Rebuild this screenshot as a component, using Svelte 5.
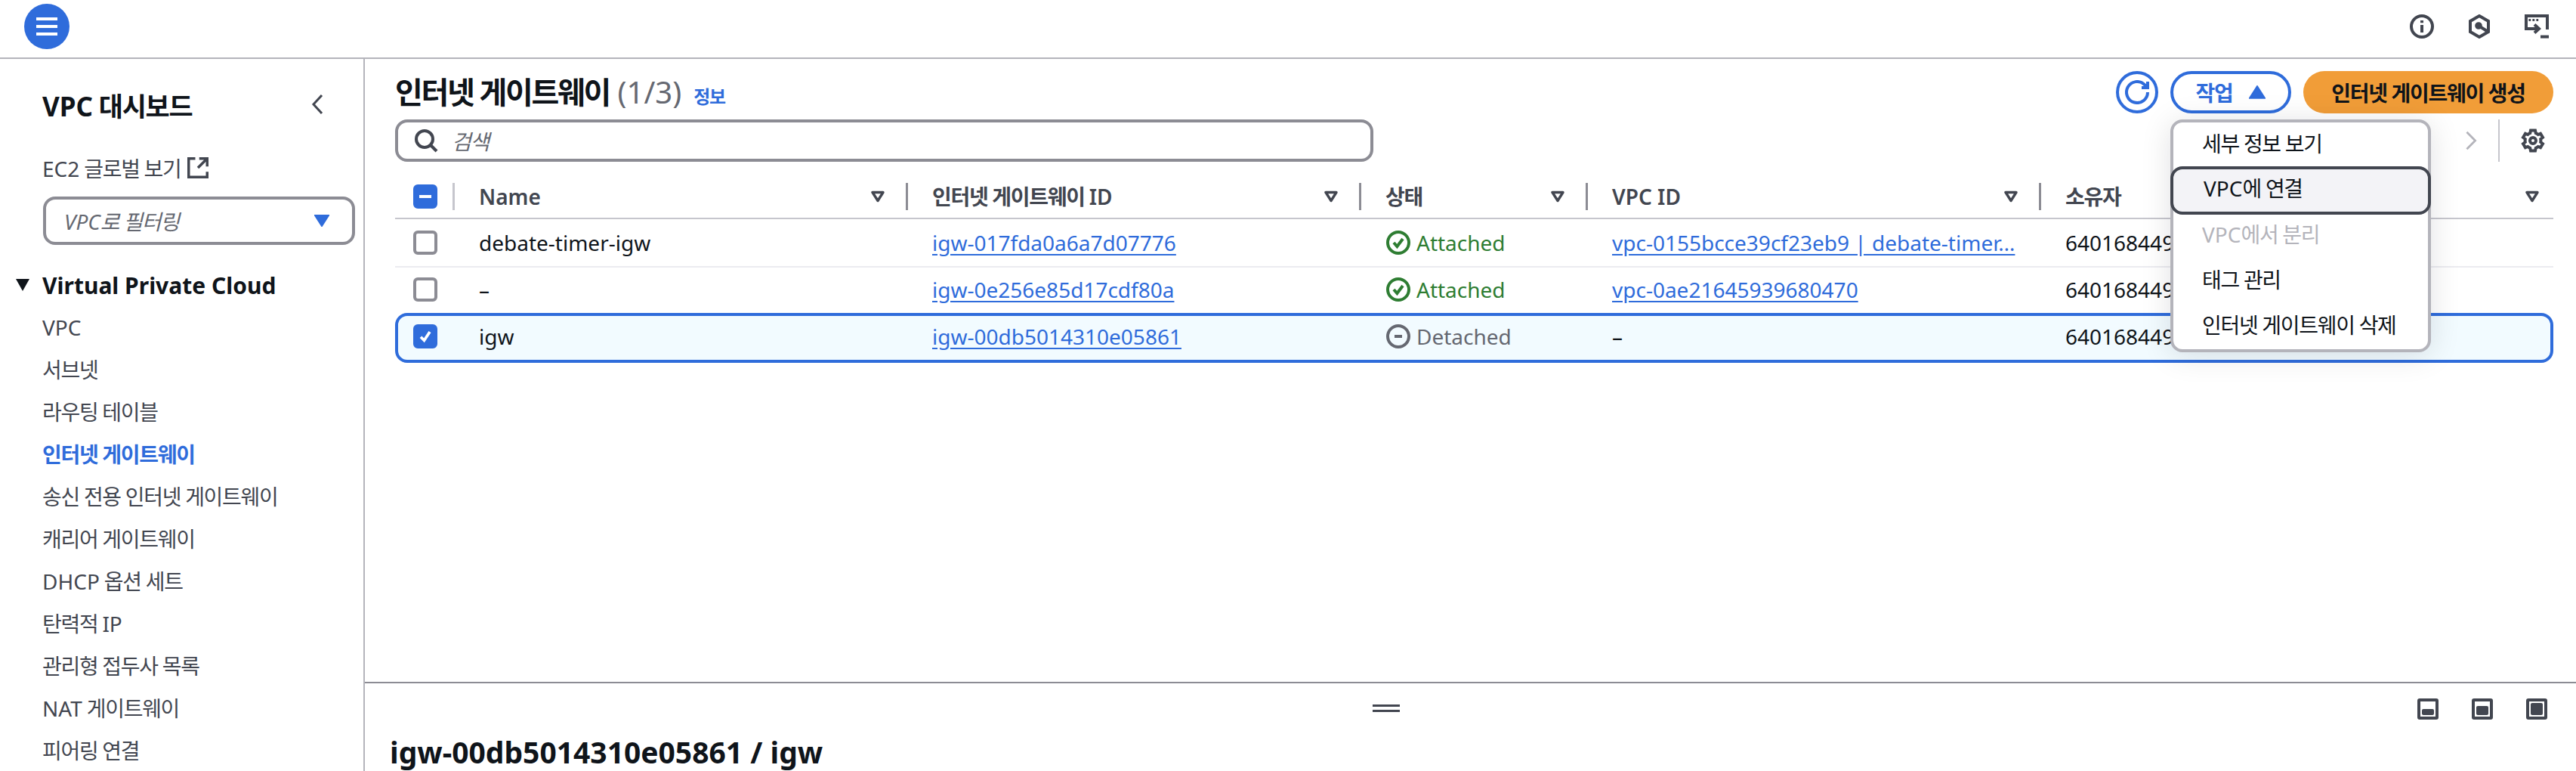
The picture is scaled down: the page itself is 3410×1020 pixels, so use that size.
<script>
  const navItems = [
    { label: 'VPC' }, { label: '서브넷' }, { label: '라우팅 테이블' },
    { label: '인터넷 게이트웨이', active: true }, { label: '송신 전용 인터넷 게이트웨이' },
    { label: '캐리어 게이트웨이' }, { label: 'DHCP 옵션 세트' }, { label: '탄력적 IP' },
    { label: '관리형 접두사 목록' }, { label: 'NAT 게이트웨이' }, { label: '피어링 연결' }
  ];
  const columns = [
    { label: 'Name', cls: 'name' }, { label: '인터넷 게이트웨이 ID' }, { label: '상태' },
    { label: 'VPC ID' }, { label: '소유자' }
  ];
  const rows = [
    { name: 'debate-timer-igw', id: 'igw-017fda0a6a7d07776', state: 'Attached', vpc: 'vpc-0155bcce39cf23eb9 | debate-timer…' },
    { name: '–', id: 'igw-0e256e85d17cdf80a', state: 'Attached', vpc: 'vpc-0ae21645939680470' },
    { name: 'igw', id: 'igw-00db5014310e05861', state: 'Detached', vpc: '', selected: true }
  ];
  const menu = [
    { label: '세부 정보 보기' }, { label: 'VPC에 연결', focus: true }, { label: 'VPC에서 분리', disabled: true },
    { label: '태그 관리' }, { label: '인터넷 게이트웨이 삭제' }
  ];
  // Hangul runs are set tighter than Latin runs, as in the reference's font.
  function runs(s) {
    return (s.match(/[\uAC00-\uD7A3 ]+|[^\uAC00-\uD7A3 ]+/g) || []).map((t) => ({ t, ko: /[\uAC00-\uD7A3]/.test(t) }));
  }
</script>

{#snippet tx(s)}<span class="tx">{#each runs(s) as r}<span class:ko={r.ko}>{r.t}</span>{/each}</span>{/snippet}

<div class="page">
  <header class="topbar">
    <button class="burger" aria-label="메뉴"><span></span><span></span><span></span></button>
    <div class="top-icons">
      <svg class="i32" viewBox="0 0 16 16"><circle cx="8" cy="8" r="7"/><path d="M8 7v5M8 4v1.6"/></svg>
      <svg class="i32" viewBox="0 0 16 16"><path d="M8 1l6 3.500v7L8 15l-6-3.500v-7z"/><path d="M7.500 7.500l5.500 3.500"/><circle class="solid" cx="7.500" cy="7.500" r="1.400"/></svg>
      <svg class="i32" viewBox="0 0 16 16"><path d="M15 10V1H1v8.500h8.500"/><path d="M6.500 6.800l3 2.700-3 2.700"/><path d="M10.500 14.800H16"/><path class="thin" d="M2.700 3.700h1.400M5.200 3.700h1.400M7.700 3.700h1.400"/></svg>
    </div>
  </header>

  <div class="body">
    <nav class="sidebar">
      <div class="side-head">
        {@render tx('VPC 대시보드')}
        <svg class="chev" viewBox="0 0 16 28"><path d="M14 2L3 14l11 12"/></svg>
      </div>
      <div class="global">
        {@render tx('EC2 글로벌 보기')}
        <svg class="ext" viewBox="0 0 16 16"><path d="M15 7V1H9M15 1L8 8M6 1H1v14h14v-4"/></svg>
      </div>
      <div class="vpc-filter">
        {@render tx('VPC로 필터링')}
        <svg class="caret" viewBox="0 0 20 16"><path d="M1 1h18L10 15z"/></svg>
      </div>
      <div class="section">
        <svg class="sec-caret" viewBox="0 0 20 16"><path d="M1 0h18L10 16z"/></svg>
        <span>Virtual Private Cloud</span>
      </div>
      <ul>
        {#each navItems as item}
          <li class:active={item.active}>{@render tx(item.label)}</li>
        {/each}
      </ul>
    </nav>

    <main class="content">
      <section class="upper">
        <div class="title-row">
          <h1>{@render tx('인터넷 게이트웨이')} <span class="count">(1/3)</span></h1>
          <a class="info" href="#info">{@render tx('정보')}</a>
          <div class="actions">
            <button class="refresh" aria-label="새로 고침">
              <svg viewBox="0 0 16 16"><path d="M15 8a7 7 0 1 1-2.100-5L15 5"/><path d="M15 1v4h-4"/></svg>
            </button>
            <div class="action-wrap">
              <button class="act">{@render tx('작업')}
                <svg viewBox="0 0 20 16"><path d="M10 1l9 14H1z"/></svg>
              </button>
              <div class="menu">
                {#each menu as m}
                  <div class="menu-item" class:focus={m.focus} class:disabled={m.disabled}>{@render tx(m.label)}</div>
                {/each}
              </div>
            </div>
            <button class="primary">{@render tx('인터넷 게이트웨이 생성')}</button>
          </div>
        </div>

        <div class="search-row">
          <div class="search">
            <svg viewBox="0 0 16 16"><circle cx="7" cy="7" r="5.500"/><path d="M11 11l4 4"/></svg>
            {@render tx('검색')}
          </div>
          <div class="pager">
            <svg class="next" viewBox="0 0 16 28"><path d="M2 2l12 12L2 26"/></svg>
            <div class="pager-sep"></div>
            <svg class="gear" viewBox="0 0 16 16"><path d="M13.100 7l1.400-1.100L13 3.400l-1.600.6a5.500 5.500 0 0 0-1.500-.9L9.500 1.300h-3l-.4 1.800c-.55.2-1.050.5-1.500.9L3 3.400 1.500 5.900 2.900 7a5.500 5.500 0 0 0 0 2L1.500 10.100 3 12.600l1.600-.6c.45.4.95.7 1.500.9l.4 1.800h3l.4-1.800c.55-.2 1.050-.5 1.500-.9l1.600.6 1.500-2.500L13.100 9a5.500 5.500 0 0 0 0-2z"/><circle cx="8" cy="8" r="2"/></svg>
          </div>
        </div>

        <div class="table">
          <div class="thead grid">
            <div class="th check-col">
              <span class="cb on"><i class="dash"></i></span>
            </div>
            {#each columns as c}
              <div class="th">
                {@render tx(c.label)}
                <svg class="sort" viewBox="0 0 20 16"><path d="M3 2.500h14L10 13.500z"/></svg>
              </div>
            {/each}
          </div>
          {#each rows as r}
            <div class="tr grid" class:selected={r.selected}>
              <div class="td check-col">
                {#if r.selected}
                  <span class="cb on"><svg viewBox="0 0 16 16"><path d="M4 8.500l3 3 5-7.500"/></svg></span>
                {:else}
                  <span class="cb"></span>
                {/if}
              </div>
              <div class="td">{r.name}</div>
              <div class="td"><a href="#igw">{r.id}</a></div>
              <div class="td">
                {#if r.state === 'Attached'}
                  <span class="status ok">
                    <svg viewBox="0 0 16 16"><circle cx="8" cy="8" r="7"/><path d="M5 8l2.200 2.500L11 5.500"/></svg>
                    {r.state}
                  </span>
                {:else}
                  <span class="status off">
                    <svg viewBox="0 0 16 16"><circle cx="8" cy="8" r="7"/><path d="M5.500 8h5"/></svg>
                    {r.state}
                  </span>
                {/if}
              </div>
              <div class="td">
                {#if r.vpc}<a href="#vpc">{r.vpc}</a>{:else}–{/if}
              </div>
              <div class="td">640168449512</div>
            </div>
          {/each}
        </div>
      </section>

      <section class="lower">
        <div class="handle-row">
          <div class="handle"><i></i><i></i></div>
          <div class="split">
            <span class="sp"><i class="s1"></i></span>
            <span class="sp"><i class="s2"></i></span>
            <span class="sp"><i class="s3"></i></span>
          </div>
        </div>
        <h2>igw-00db5014310e05861 / igw</h2>
      </section>
    </main>
  </div>
</div>

<style>
  :global(body) { margin: 0; background: #fff; overflow: hidden; }
  .page {
    width: 3410px; height: 1020px; display: flex; flex-direction: column; overflow: hidden;
    font-family: "Noto Sans", "Noto Sans CJK KR", sans-serif; font-size: 28px; color: #0f141a; background: #fff;
  }
  button { font-family: inherit; cursor: pointer; }
  svg { display: block; fill: none; stroke: currentColor; stroke-width: 2; }
  .tx { white-space: pre; }
  .ko { letter-spacing: -1.3px; }

  .topbar {
    height: 76px; flex: none; border-bottom: 2px solid #b4b4bb; display: flex; align-items: center;
    justify-content: space-between; padding: 0 36px 0 32px; box-sizing: content-box;
  }
  .burger {
    width: 60px; height: 60px; border-radius: 50%; border: 0; background: #2f6cdb; padding: 0; margin-top: -6px;
    display: flex; flex-direction: column; gap: 6px; align-items: center; justify-content: center;
  }
  .burger span { width: 28px; height: 4px; background: #fff; }
  .top-icons { display: flex; gap: 44px; color: #424650; margin-top: -6px; }
  .i32 { width: 32px; height: 32px; }
  .solid { fill: currentColor; }
  .thin { stroke-width: 1.500; }

  .body { flex: 1; display: flex; min-height: 0; }

  .sidebar { width: 483px; flex: none; border-right: 2px solid #b4b4bb; padding-left: 56px; box-sizing: border-box; overflow: hidden; color: #424650; }
  .side-head {
    display: flex; justify-content: space-between; align-items: center; width: 372px; height: 44px; margin-top: 38px;
    font-size: 35px; font-weight: 700; color: #0f141a;
  }
  .chev { width: 16px; height: 28px; stroke: #424650; stroke-width: 3; }
  .global { display: flex; align-items: center; gap: 8px; margin-top: 42px; height: 40px; }
  .ext { width: 28px; height: 28px; stroke: #424650; }
  .vpc-filter {
    margin: 18px 0 0 1px; width: 413px; height: 64px; box-sizing: border-box; border: 4px solid #8c8c94; border-radius: 16px;
    display: flex; align-items: center; justify-content: space-between; padding: 0 30px 0 24px;
    font-style: italic; color: #656871;
  }
  .caret { width: 20px; height: 16px; fill: #2f6cdb; stroke: #2f6cdb; }
  .section { position: relative; margin-top: 32px; height: 42px; display: flex; align-items: center; font-weight: 700; font-size: 30px; color: #0f141a; }
  .sec-caret { position: absolute; left: -36px; top: 13px; width: 20px; height: 16px; fill: #0f141a; stroke: none; }
  ul { list-style: none; margin: 7px 0 0; padding: 0; }
  li { height: 56px; line-height: 56px; white-space: nowrap; }
  li.active { color: #2f6cdb; font-weight: 600; }

  .content { flex: 1; min-width: 0; display: flex; flex-direction: column; }
  .upper { flex: 1; min-height: 0; padding: 16px 30px 0 40px; position: relative; }

  .title-row { display: flex; align-items: center; height: 56px; }
  h1 { margin: 0; font-size: 40px; font-weight: 700; line-height: 56px; white-space: nowrap; }
  h1 .ko { letter-spacing: -2.300px; }
  .count { font-weight: 400; color: #656871; }
  .info { margin-left: 16px; margin-top: 8px; font-size: 24px; color: #2f6cdb; text-decoration: none; font-weight: 700; }
  .actions { margin-left: auto; display: flex; gap: 16px; align-items: center; }
  .refresh {
    width: 56px; height: 56px; border-radius: 50%; border: 4px solid #2f6cdb; background: #fff; color: #2f6cdb;
    padding: 0; display: flex; align-items: center; justify-content: center;
  }
  .refresh svg { width: 32px; height: 32px; }
  .action-wrap { position: relative; }
  .act {
    width: 160px; height: 56px; border-radius: 28px; border: 4px solid #2f6cdb; background: #fff; color: #2f6cdb;
    font-size: 28px; font-weight: 700; display: flex; align-items: center; justify-content: center; gap: 22px; padding: 0;
  }
  .act svg { width: 22px; height: 18px; fill: #2f6cdb; stroke: #2f6cdb; }
  .primary {
    width: 331px; height: 56px; border-radius: 28px; border: 0; background: #f19d38; color: #0f141a;
    font-size: 28px; font-weight: 700; padding: 0;
  }
  .menu {
    position: absolute; z-index: 5; left: 0; top: 64px; width: 345px; box-sizing: border-box; background: #fff;
    border: 4px solid #b4b4bb; border-radius: 16px; box-shadow: 0 4px 40px rgba(0, 7, 22, 0.12);
  }
  .menu-item {
    height: 60px; line-height: 56px; padding: 0 42px; margin: 0 -4px; white-space: nowrap; color: #0f141a; box-sizing: border-box;
  }
  .menu-item.focus {
    height: 64px; margin: -2px -4px; line-height: 50px; background: #f3f3f7; border: 4px solid #424650; border-radius: 16px; padding: 0 40px;
  }
  .menu-item.disabled { color: #b4b4bb; }

  .search-row { display: flex; align-items: center; height: 56px; margin-top: 8px; }
  .search {
    width: 1295px; height: 56px; box-sizing: border-box; border: 4px solid #8c8c94; border-radius: 16px;
    display: flex; align-items: center; padding-left: 21px; gap: 18px; font-style: italic; color: #656871;
  }
  .search svg { width: 32px; height: 32px; stroke: #424650; }
  .pager { margin-left: auto; display: flex; align-items: center; width: 117px; height: 56px; }
  .next { width: 16px; height: 26px; stroke: #b4b4bb; stroke-width: 3; }
  .pager-sep { width: 2px; height: 56px; background: #c6c6cd; margin-left: 28px; }
  .gear { width: 32px; height: 32px; stroke: #424650; margin-left: 28px; }

  .grid { display: grid; grid-template-columns: 77px 600px 600px 300px 600px 1fr; }
  .table { margin-top: 28px; }
  .thead { height: 46px; border-bottom: 2px solid #c6c6cd; box-sizing: content-box; }
  .th {
    height: 36px; display: flex; align-items: center; justify-content: space-between; padding: 0 27px 0 34px;
    margin-right: -2px; font-weight: 600; color: #424650; border-right: 3px solid #8c8c94; box-sizing: border-box;
    line-height: 36px;
  }
  .th:last-child { border-right: 0; padding-right: 18px; margin-right: 0; }
  .th.check-col { justify-content: flex-start; padding: 0 0 0 24px; border-right: 3px solid #c6c6cd; }
  .sort { width: 20px; height: 16px; stroke: #424650; stroke-width: 3.400; stroke-linejoin: round; flex: none; }

  .cb {
    width: 32px; height: 32px; box-sizing: border-box; border: 4px solid #8c8c94; border-radius: 6px; background: #fff;
    display: flex; align-items: center; justify-content: center; color: #fff;
  }
  .cb.on { background: #2f6cdb; border-color: #2f6cdb; }
  .cb svg { width: 24px; height: 24px; stroke: #fff; stroke-width: 2.500; flex: none; }
  .dash { width: 16px; height: 4px; background: #fff; }

  .tr { height: 62px; align-items: center; border-bottom: 2px solid #ebebf0; box-sizing: content-box; }
  .tr:nth-child(3) { border-bottom: 0; height: 58px; }
  .tr.selected {
    height: 66px; box-sizing: border-box; border: 4px solid #2f6cdb; border-radius: 16px; background: #f2fbff;
    margin-top: 2px; position: relative;
  }
  .tr.selected .td { position: relative; left: -4px; top: -2px; }
  .td { padding-left: 34px; white-space: nowrap; overflow: hidden; box-sizing: border-box; }
  .td.check-col { padding-left: 24px; }
  .td a { color: #2f6cdb; text-decoration: underline; text-underline-offset: 4px; }
  .status { display: flex; align-items: center; gap: 8px; margin-left: 1px; }
  .status svg { width: 32px; height: 32px; flex: none; }
  .ok { color: #2e7d32; }
  .off { color: #656871; }

  .lower { height: 118px; flex: none; border-top: 2px solid #8c8c94; box-sizing: border-box; position: relative; }
  .handle-row { position: relative; height: 66px; }
  .handle { position: absolute; left: 1334px; top: 28px; display: flex; flex-direction: column; gap: 4px; }
  .handle i { display: block; width: 36px; height: 3px; background: #424650; }
  .split { position: absolute; right: 38px; top: 20px; display: flex; gap: 44px; }
  .sp { width: 28px; height: 28px; border: 4px solid #424650; border-radius: 3px; box-sizing: border-box; display: flex; align-items: flex-end; padding: 2px; }
  .sp i { display: block; width: 100%; background: #424650; border-radius: 2px; }
  .s1 { height: 8px; } .s2 { height: 12px; } .s3 { height: 16px; }
  h2 { margin: 2px 0 0 33px; font-size: 39px; font-weight: 700; line-height: 46px; white-space: nowrap; }
</style>
